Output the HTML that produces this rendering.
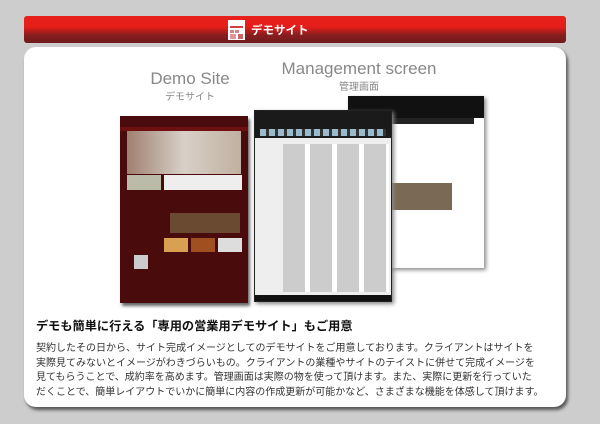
<!DOCTYPE html>
<html><head><meta charset="utf-8"><style>
body{margin:0;width:600px;height:424px;background:#cdcdcd;position:relative;overflow:hidden;font-family:"Liberation Sans","Noto Sans CJK JP",sans-serif}
.bar{position:absolute;left:24px;top:16px;width:542px;height:27px;border-radius:3px;background:linear-gradient(#e8201c 0,#e61e1a 40%,#8a1d1e 70%,#6e1c1e 100%)}
.bar .t{position:absolute;left:227px;top:6px;color:#fff;font-weight:bold;font-size:11.5px}
.card{position:absolute;left:24px;top:47px;width:542px;height:360px;background:#fff;border-radius:12px;box-shadow:2px 3px 3px #555}
.abs{position:absolute}
.g{color:#888;text-align:center}
p{margin:0}
</style></head><body>
<div class="bar">
<svg class="abs" style="left:204px;top:4px" width="17" height="20"><rect x="0" y="0" width="17" height="20" fill="#fff"/><rect x="2" y="6" width="13" height="2" fill="#c44"/><rect x="2" y="10" width="4" height="3" fill="#c88"/><rect x="7" y="10" width="4" height="3" fill="#c88"/><rect x="2" y="14" width="6" height="5" fill="#d99"/><rect x="10" y="14" width="5" height="5" fill="#c66"/></svg>
<div class="t">デモサイト</div></div>
<div class="card">
<div class="abs g" style="left:100px;top:22px;width:132px;font-size:17px;line-height:20px">Demo Site</div>
<div class="abs g" style="left:100px;top:41px;width:132px;font-size:10px">デモサイト</div>
<div class="abs g" style="left:240px;top:12px;width:190px;font-size:17px;line-height:20px">Management screen</div>
<div class="abs g" style="left:240px;top:31px;width:190px;font-size:10px">管理画面</div>
<div class="abs" style="left:324px;top:49px;width:136px;height:172px;background:#fff;box-shadow:2px 2px 4px #888">
 <div style="height:22px;background:#111"></div>
 <div style="position:absolute;left:6px;top:22px;width:120px;height:6px;background:#222"></div>
 <div style="position:absolute;left:20px;top:87px;width:84px;height:27px;background:#7a6a55"></div>
 <div style="position:absolute;left:14px;top:135px;width:28px;height:22px;background:#7a5a8a"></div>
</div>
<div class="abs" style="left:230px;top:63px;width:136px;height:190px;background:#eee;box-shadow:2px 2px 4px #888;border:1px solid #222">
 <div style="height:27px;background:#1a1a1a"></div>
 <div style="position:absolute;left:5px;top:18px;width:126px;height:7px;background:repeating-linear-gradient(90deg,#9bc 0 6px,#333 6px 9px)"></div>
 <div style="position:absolute;left:28px;top:33px;width:106px;height:148px;background:repeating-linear-gradient(90deg,#ccc 0 22px,#fff 22px 27px)"></div>
 <div style="position:absolute;left:0;top:184px;width:136px;height:6px;background:#111"></div>
</div>
<div class="abs" style="left:96px;top:69px;width:128px;height:187px;background:#4a0b0c;box-shadow:2px 3px 3px #666">
 <div style="position:absolute;left:0;top:11px;width:128px;height:4px;background:#6e1010"></div>
 <div style="position:absolute;left:7px;top:15px;width:114px;height:43px;background:linear-gradient(90deg,#a08070,#d8d0c8,#c0b0a0)"></div>
 <div style="position:absolute;left:44px;top:59px;width:78px;height:15px;background:#eee"></div>
 <div style="position:absolute;left:7px;top:59px;width:34px;height:15px;background:#bba"></div>
 <div style="position:absolute;left:50px;top:97px;width:70px;height:20px;background:#6a4a30"></div>
 <div style="position:absolute;left:44px;top:122px;width:24px;height:14px;background:#d8a050"></div>
 <div style="position:absolute;left:71px;top:122px;width:24px;height:14px;background:#a05020"></div>
 <div style="position:absolute;left:98px;top:122px;width:24px;height:14px;background:#ddd"></div>
 <div style="position:absolute;left:14px;top:139px;width:14px;height:14px;background:#ccc"></div>
</div>
<div class="abs" style="left:12px;top:269px;font-size:12.2px;font-weight:bold;color:#111">デモも簡単に行える「専用の営業用デモサイト」もご用意</div>
<div class="abs" style="left:12px;top:295px;width:520px;font-size:10px;line-height:14.7px;color:#333;white-space:nowrap">
<p>契約したその日から、サイト完成イメージとしてのデモサイトをご用意しております。クライアントはサイトを</p>
<p>実際見てみないとイメージがわきづらいもの。クライアントの業種やサイトのテイストに併せて完成イメージを</p>
<p>見てもらうことで、成約率を高めます。管理画面は実際の物を使って頂けます。また、実際に更新を行っていた</p>
<p>だくことで、簡単レイアウトでいかに簡単に内容の作成更新が可能かなど、さまざまな機能を体感して頂けます。</p>
</div>
</div>
</body></html>
